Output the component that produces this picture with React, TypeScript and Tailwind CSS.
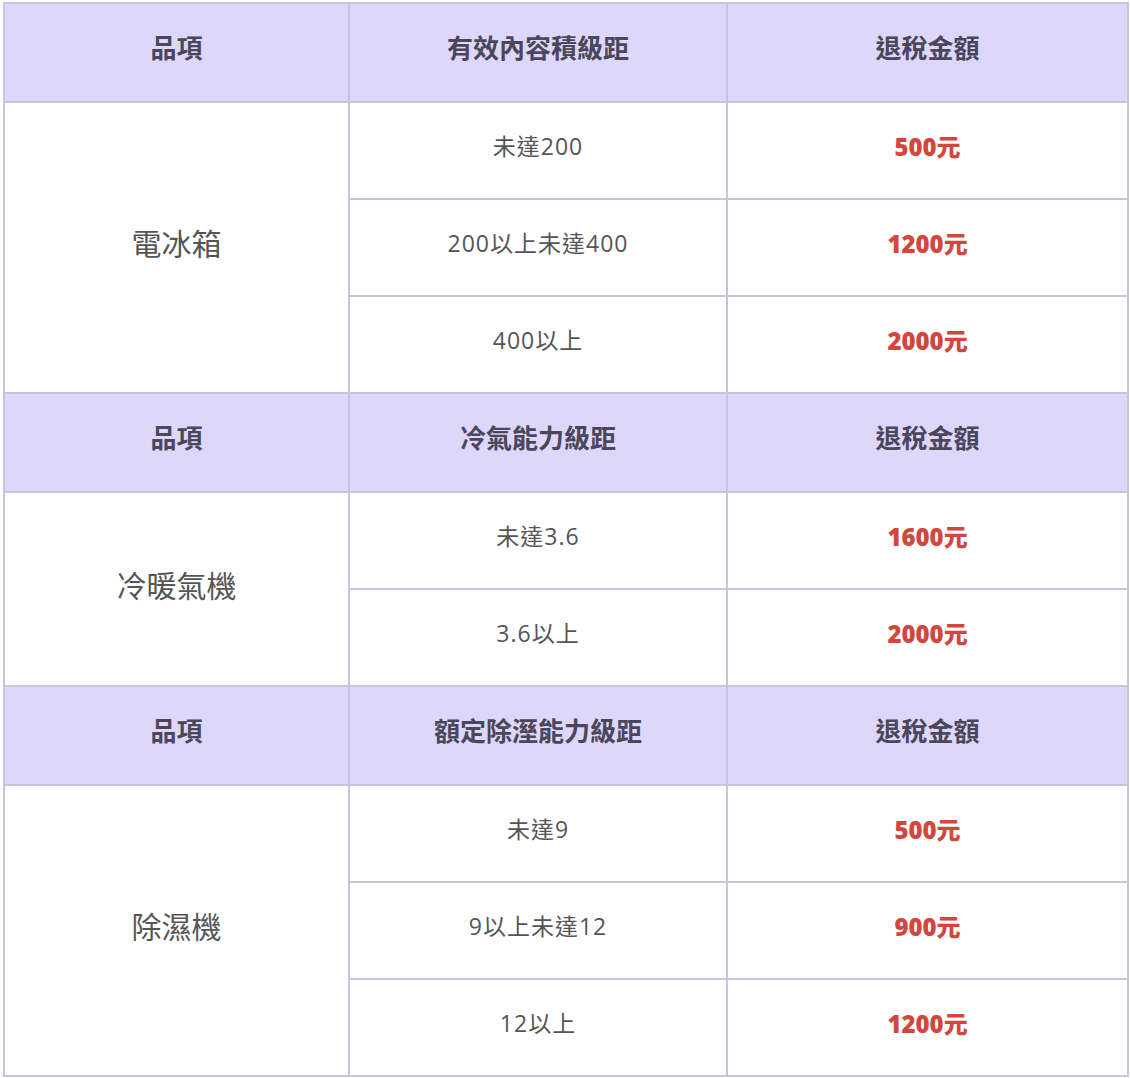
import React from 'react';

type Section = {
  range: string;
  item: string;
  rows: { label: string; amount: string }[];
};

const SECTIONS: Section[] = [
  {
    range: '有效內容積級距',
    item: '電冰箱',
    rows: [
      { label: '未達200', amount: '500元' },
      { label: '200以上未達400', amount: '1200元' },
      { label: '400以上', amount: '2000元' },
    ],
  },
  {
    range: '冷氣能力級距',
    item: '冷暖氣機',
    rows: [
      { label: '未達3.6', amount: '1600元' },
      { label: '3.6以上', amount: '2000元' },
    ],
  },
  {
    range: '額定除溼能力級距',
    item: '除濕機',
    rows: [
      { label: '未達9', amount: '500元' },
      { label: '9以上未達12', amount: '900元' },
      { label: '12以上', amount: '1200元' },
    ],
  },
];

const font = { fontFamily: '"Open Sans", "Noto Sans CJK TC", sans-serif' };

export default function App() {
  return (
    <div className="w-[1130px] h-[1078px] bg-white pt-[2px] pl-[3px]" style={font}>
      <table className="w-[1124px] table-fixed border-collapse border-2 border-[#c8c4dc]">
        <colgroup>
          <col className="w-[345px]" />
          <col className="w-[378px]" />
          <col className="w-[401px]" />
        </colgroup>
        <tbody>
          {SECTIONS.map((s) => (
            <React.Fragment key={s.item}>
              {/* 表頭 */}
              <tr className="h-[99px] bg-[#dcd7fb]">
                <th className="border-2 border-[#c8c4dc] pb-[8px] text-[26px] font-bold text-[#4b4659]">品項</th>
                <th className="border-2 border-[#c8c4dc] pb-[8px] text-[26px] font-bold text-[#4b4659]">{s.range}</th>
                <th className="border-2 border-[#c8c4dc] pb-[8px] text-[26px] font-bold text-[#4b4659]">退稅金額</th>
              </tr>
              {s.rows.map((r, i) => (
                <tr key={r.label} className="h-[97px]">
                  {i === 0 && (
                    <td
                      rowSpan={s.rows.length}
                      className="border-2 border-[#c8c4dc] pb-[8px] text-center text-[30px] text-[#555]"
                    >
                      {s.item}
                    </td>
                  )}
                  <td className="border-2 border-[#c8c4dc] pb-[8px] text-center text-[23px] tracking-[1px] text-[#555]">
                    {r.label}
                  </td>
                  <td className="border-2 border-[#c8c4dc] pb-[8px] text-center text-[24px] font-extrabold text-[#d3463e]">
                    {r.amount}
                  </td>
                </tr>
              ))}
            </React.Fragment>
          ))}
        </tbody>
      </table>
    </div>
  );
}
